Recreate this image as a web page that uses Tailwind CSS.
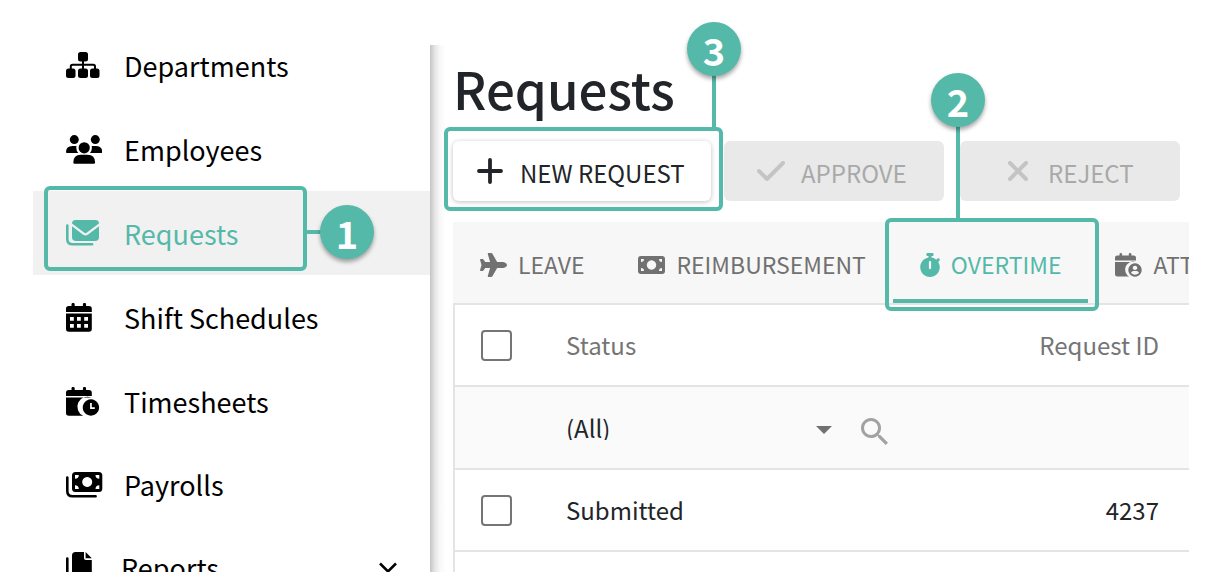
<!DOCTYPE html>
<html lang="en">
<head>
    <meta charset="UTF-8">
    <meta name="viewport" content="width=device-width, initial-scale=1.0">
    <title>Requests</title>
    <script src="https://cdn.jsdelivr.net/npm/@tailwindcss/browser@4"></script>
</head>
<body class="bg-white font-['Noto_Sans_CJK_SC','Noto_Sans',sans-serif]">
    <div class="h-screen pl-[33px] pr-[27px] pb-[5px]">
    <div class="flex h-full overflow-hidden">
        <!-- Sidebar -->
        <nav class="w-[397px] shrink-0 pt-[23px] text-[27px] leading-none text-black">
            <a href="#" class="flex h-[84px] items-center pl-[33px]">
                <span class="w-[58px]">
                    <svg class="h-[26px] w-[34px]" viewBox="0 0 34 26" fill="currentColor">
                        <rect x="12" y="0" width="10" height="9.5" rx="2.5"/>
                        <rect x="0" y="16.5" width="9.5" height="9.5" rx="2.5"/>
                        <rect x="12" y="16.5" width="10" height="9.5" rx="2.5"/>
                        <rect x="24" y="16.5" width="9.5" height="9.5" rx="2.5"/>
                        <path d="M17 8v10M4.8 18v-3.5q0-1.7 1.7-1.7h20.8q1.7 0 1.7 1.7V18" fill="none" stroke="currentColor" stroke-width="2"/>
                    </svg>
                </span>
                Departments
            </a>
            <a href="#" class="flex h-[84px] items-center pl-[33px]">
                <span class="w-[58px]">
                    <svg class="h-[29px] w-[36px]" viewBox="0 0 36 29" fill="currentColor">
                        <circle cx="8.3" cy="4.6" r="4.5"/>
                        <circle cx="29.3" cy="4.6" r="4.5"/>
                        <circle cx="18.2" cy="12.8" r="5.6"/>
                        <path d="M0 17q0-6 6.5-6h4q-.8 4.200 1.800 7H1q-1 0-1-1zM36.200 17q0-6-6.500-6h-4q.8 4.200-1.800 7h11.300q1 0 1-1zM7.300 27.500q0-7.800 7.500-7.800h6.800q7.500 0 7.500 7.800 0 1.300-1.300 1.300H8.600q-1.300 0-1.300-1.300z"/>
                    </svg>
                </span>
                Employees
            </a>
            <a href="#" class="relative flex h-[84px] items-center bg-[#f1f1f1] pl-[33px] text-[#54b9a9]">
                <span class="w-[58px]">
                    <svg class="h-[26px] w-[34px]" viewBox="0 0 34 26" fill="currentColor">
                        <path d="M1.300 5.500V19q0 5.300 5.300 5.300h19.500" fill="none" stroke="currentColor" stroke-width="2.600" stroke-linecap="round"/>
                        <path d="M6 3.500Q6 0 9.500 0h20Q33 0 33 3.500L20.600 12.800q-1.100.8-2.200 0zM6 6.300l10.900 8.200q2.600 1.900 5.200 0L33 6.300V17q0 4-4 4H10q-4 0-4-4z"/>
                    </svg>
                </span>
                Requests
                <span class="absolute -top-[5px] left-[11px] h-[85px] w-[263px] rounded-md border-4 border-[#54b9a9]"></span>
                <span class="absolute top-[39px] left-[273px] h-1 w-5 bg-[#54b9a9]"></span>
                <span class="absolute top-[14px] left-[287px] flex size-[54px] items-center justify-center rounded-full bg-[#54b9a9] pt-0.5 text-[38px] font-bold text-white shadow-[0_3px_4px_rgba(0,0,0,0.35)]">1</span>
            </a>
            <a href="#" class="flex h-[84px] items-center pl-[33px]">
                <span class="w-[58px]">
                    <svg class="h-[29px] w-[26px]" viewBox="0 0 26 29" fill="currentColor">
                        <path d="M5.500 3V1.500a1.600 1.600 0 0 1 3.200 0V3h8.200V1.500a1.600 1.600 0 0 1 3.200 0V3h2.900q2.800 0 2.800 2.800V9H0V5.800Q0 3 2.800 3z"/>
                        <path fill-rule="evenodd" d="M0 10.600h25.800V26q0 2.800-2.800 2.800H2.800Q0 28.800 0 26zM4 14v3.800h3.800V14zM11 14v3.800h3.800V14zM18.200 14v3.800H22V14zM4 21v3.800h3.800V21zM11 21v3.800h3.800V21zM18.200 21v3.800H22V21z"/>
                    </svg>
                </span>
                Shift Schedules
            </a>
            <a href="#" class="flex h-[84px] items-center pl-[33px]">
                <span class="w-[58px]">
                    <svg class="h-[29px] w-[34px]" viewBox="0 0 34 29" fill="currentColor">
                        <path d="M5.500 3V1.500a1.600 1.600 0 0 1 3.200 0V3h8.200V1.500a1.600 1.600 0 0 1 3.200 0V3h2.900q2.800 0 2.800 2.800V9H0V5.800Q0 3 2.800 3z"/>
                        <path d="M0 10.600h25.500a10 10 0 0 0-8.300 18.200H2.800Q0 28.800 0 26z"/>
                        <path fill-rule="evenodd" d="M24.900 12.300a8.200 8.200 0 1 0 .01 0zM24.100 16h1.700v4.200h3V22h-4.700z"/>
                    </svg>
                </span>
                Timesheets
            </a>
            <a href="#" class="flex h-[83px] items-center pl-[33px]">
                <span class="w-[58px]">
                    <svg class="h-[26px] w-[37px]" viewBox="0 0 37 26" fill="currentColor">
                        <path d="M1.300 5.500V19q0 5.300 5.300 5.300h23" fill="none" stroke="currentColor" stroke-width="2.600" stroke-linecap="round"/>
                        <path fill-rule="evenodd" d="M9.500 0h23.300q3.500 0 3.500 3.500v13q0 3.500-3.500 3.500H9.500Q6 20 6 16.500v-13Q6 0 9.500 0zM21.200 5a5 5 0 1 0 .01 0zM9 3v3.800Q12.800 6.800 12.800 3zM33.300 3h-3.800q0 3.800 3.800 3.800zM9 17v-3.800q3.800 0 3.800 3.800zM33.300 17v-3.800q-3.800 0-3.800 3.800z"/>
                    </svg>
                </span>
                Payrolls
            </a>
            <a href="#" class="flex h-[83px] items-center px-[33px]">
                <span class="w-[55px]">
                    <svg class="h-[31px] w-[26px]" viewBox="0 0 26 31" fill="currentColor">
                        <path d="M1.300 6.500V24q0 5.300 5.300 5.300h11" fill="none" stroke="currentColor" stroke-width="2.600" stroke-linecap="round"/>
                        <path d="M9.500 0H18v6q0 2 2 2h5.800v14q0 3.500-3.500 3.500H9.500Q6 25.500 6 22V3.500Q6 0 9.500 0zM19.600 0l6.200 6.300h-6.200z"/>
                    </svg>
                </span>
                Reports
                <svg class="ml-auto h-[12px] w-[18px]" viewBox="0 0 18 12" fill="none" stroke="currentColor" stroke-width="2.500">
                    <path d="M1 1.500l8 8 8-8"/>
                </svg>
            </a>
        </nav>

        <!-- Content -->
        <main class="mt-[45px] min-w-0 flex-1 bg-[linear-gradient(to_right,#c4c4c4,#e6e6e6_5px,#f8f8f8_10px,#ffffff_16px)] pl-[23px] text-[24px] leading-none text-[#212529]">
            <h1 class="mb-2.5 flex h-[86px] items-center text-[51px] font-medium">Requests</h1>

            <div class="flex">
                <div class="relative mr-[13px]">
                    <button class="flex h-[60px] w-[258px] items-center rounded-md bg-white pl-6 shadow-[0_1px_5px_rgba(0,0,0,0.25)]">
                        <svg class="mr-[17px] size-[26px]" viewBox="0 0 26 26" fill="none" stroke="currentColor" stroke-width="3.800" stroke-linecap="round">
                            <path d="M13 2v22M2 13h22"/>
                        </svg>
                        <span class="pt-1">NEW REQUEST</span>
                    </button>
                    <span class="pointer-events-none absolute -top-[14px] -left-[9px] h-[84px] w-[279px] rounded-md border-4 border-[#54b9a9]"></span>
                    <span class="absolute -top-[70px] left-[259px] h-14 w-1 bg-[#54b9a9]"></span>
                    <span class="absolute -top-[119px] left-[234px] flex size-[54px] items-center justify-center rounded-full bg-[#54b9a9] pt-0.5 text-[38px] font-bold text-white shadow-[0_3px_4px_rgba(0,0,0,0.35)]">3</span>
                </div>
                <button disabled class="mr-4 flex h-[60px] w-[220px] items-center rounded-md bg-[#e9e9e9] pl-[33px] text-[#a9a9a9]">
                    <svg class="mr-4 h-[20px] w-[28px] text-[#c4c4c4]" viewBox="0 0 28 20" fill="none" stroke="currentColor" stroke-width="4" stroke-linecap="round" stroke-linejoin="round">
                        <path d="M2 10l8 8L26 2"/>
                    </svg>
                    <span class="pt-1">APPROVE</span>
                </button>
                <button disabled class="flex h-[60px] w-[220px] items-center rounded-md bg-[#e9e9e9] pl-12 text-[#a9a9a9]">
                    <svg class="mr-5 size-[20px] text-[#c4c4c4]" viewBox="0 0 20 20" fill="none" stroke="currentColor" stroke-width="4" stroke-linecap="round">
                        <path d="M2 2l16 16M18 2L2 18"/>
                    </svg>
                    <span class="pt-1">REJECT</span>
                </button>
            </div>

            <div class="mt-[21px] flex h-[83px] border-b-2 border-[#e4e4e4] bg-[#f7f7f7] text-[23px] text-[#717171]">
                <button class="flex shrink-0 items-center gap-[11px] px-[27px] pt-1">
                    <svg class="h-[24px] w-[27px]" viewBox="0 0 576 512" fill="currentColor">
                        <path d="M482.300 192c34.200 0 93.700 29 93.700 64c0 36-59.500 64-93.700 64l-116.600 0L265.200 495.900c-5.700 10-16.300 16.100-27.800 16.100l-56.200 0c-10.600 0-18.300-10.200-15.400-20.400l49-171.600L112 320 68.800 377.600c-3 4-7.800 6.400-12.800 6.400l-42 0c-7.800 0-14-6.300-14-14c0-1.300 .2-2.600 .5-3.900L32 256 .5 145.900c-.4-1.300-.5-2.600-.5-3.900c0-7.800 6.300-14 14-14l42 0c5 0 9.800 2.400 12.800 6.400L112 192l102.900 0-49-171.600C162.900 10.200 170.600 0 181.200 0l56.200 0c11.500 0 22.100 6.200 27.800 16.100L365.700 192l116.600 0z"/>
                    </svg>
                    LEAVE
                </button>
                <button class="flex shrink-0 items-center gap-[11px] px-[27px] pt-1">
                    <svg class="h-[18px] w-[27px]" viewBox="0 0 27 18" fill="currentColor">
                        <path fill-rule="evenodd" d="M3 0h21q3 0 3 3v12q0 3-3 3H3q-3 0-3-3V3q0-3 3-3zM13.500 4.300a4.700 4.700 0 1 0 .01 0zM3 3v3Q6 6 6 3zM24 3h-3q0 3 3 3zM3 15v-3q3 0 3 3zM24 15v-3q-3 0-3 3z"/>
                    </svg>
                    REIMBURSEMENT
                </button>
                <button class="relative flex shrink-0 items-center gap-[11px] px-[27px] pt-1 text-[#54b9a9]">
                    <svg class="h-[24px] w-[20px]" viewBox="16 0 416 512" fill="currentColor">
                        <path d="M176 0c-17.700 0-32 14.300-32 32s14.300 32 32 32l16 0 0 34.400C92.300 113.800 16 200 16 304c0 114.900 93.100 208 208 208s208-93.100 208-208c0-41.800-12.300-80.700-33.500-113.200l24.100-24.100c12.500-12.500 12.500-32.800 0-45.300s-32.800-12.500-45.300 0L355.700 143c-28.100-23-62.200-38.800-99.700-44.600L256 64l16 0c17.700 0 32-14.300 32-32s-14.300-32-32-32L224 0 176 0zm72 192l0 128c0 13.300-10.700 24-24 24s-24-10.700-24-24l0-128c0-13.300 10.700-24 24-24s24 10.700 24 24z"/>
                    </svg>
                    OVERTIME
                    <span class="absolute inset-x-0 bottom-0 h-1 bg-[#54b9a9]"></span>
                    <span class="absolute -top-1 -right-[11px] -bottom-[8px] -left-[8px] rounded-md border-4 border-[#54b9a9]"></span>
                    <span class="absolute -top-[98px] left-[63px] h-[95px] w-1 bg-[#54b9a9]"></span>
                    <span class="absolute -top-[149px] left-[38px] flex size-[54px] items-center justify-center rounded-full bg-[#54b9a9] pt-0.5 text-[38px] font-bold text-white shadow-[0_3px_4px_rgba(0,0,0,0.35)]">2</span>
                </button>
                <button class="flex shrink-0 items-center gap-[11px] pl-[27px] pt-1">
                    <svg class="h-[24px] w-[27px]" viewBox="0 0 27 24" fill="currentColor">
                        <path d="M4.500 2.500V1.300a1.300 1.300 0 0 1 2.600 0v1.200h6.700V1.300a1.300 1.300 0 0 1 2.600 0v1.200h2.300Q21 2.500 21 4.800V7.500H0V4.800q0-2.300 2.300-2.300z"/>
                        <path d="M0 9h20.500a8 8 0 0 0-6.500 14.500H2.300Q0 23.500 0 21.200z"/>
                        <path fill-rule="evenodd" d="M20 10.300a6.700 6.700 0 1 0 .01 0zM20 12.700a2.200 2.200 0 1 1-.01 0zM16 20q.5-2 2.500-2h3q2 0 2.500 2-4 3.500-8 0z"/>
                    </svg>
                    ATT
                </button>
            </div>

            <table class="w-full table-fixed border-collapse border-l-2 border-[#e4e4e4]">
                <colgroup>
                    <col class="w-[100px]">
                    <col class="w-[288px]">
                    <col>
                </colgroup>
                <thead>
                    <tr class="h-[81px] border-b-2 border-[#e4e4e4] text-[#757575]">
                        <th class="pl-[26px] text-left"><input type="checkbox" aria-label="Select all" class="block size-[31px] appearance-none rounded-sm border-2 border-[#757575]"></th>
                        <th class="pl-3 text-left font-normal">Status</th>
                        <th class="pr-[30px] text-right font-normal">Request ID</th>
                    </tr>
                    <tr class="h-[83px] border-b-2 border-[#e4e4e4] bg-[#fafafa]">
                        <td></td>
                        <td class="pl-3">
                            <div class="relative">
                                <select aria-label="Filter by status" class="block h-10 w-full appearance-none bg-transparent">
                                    <option>(All)</option>
                                </select>
                                <svg class="pointer-events-none absolute top-[18px] right-[10px] h-[8px] w-[16px] text-[#717171]" viewBox="0 0 16 8" fill="currentColor"><path d="M0 0h16L8 8z"/></svg>
                            </div>
                        </td>
                        <td class="pl-[19px]">
                            <svg class="mt-2 size-[27px] text-[#a2a2a2]" viewBox="3 3 17.500 17.500" fill="currentColor">
                                <path d="M15.500 14h-.79l-.28-.27C15.410 12.590 16 11.110 16 9.500 16 5.910 13.090 3 9.500 3S3 5.910 3 9.500 5.910 16 9.500 16c1.610 0 3.090-.59 4.230-1.570l.27.28v.79l5 4.990L20.490 19l-4.990-5zm-6 0C7.010 14 5 11.990 5 9.500S7.010 5 9.500 5 14 7.010 14 9.500 11.990 14 9.500 14z"/>
                            </svg>
                        </td>
                    </tr>
                </thead>
                <tbody>
                    <tr class="h-[82px] border-b-2 border-[#e4e4e4]">
                        <td class="pl-[26px]"><input type="checkbox" aria-label="Select request 4237" class="block size-[31px] appearance-none rounded-sm border-2 border-[#757575]"></td>
                        <td class="pl-3">Submitted</td>
                        <td class="pr-[30px] text-right">4237</td>
                    </tr>
                    <tr class="h-[82px]">
                        <td></td>
                        <td></td>
                        <td></td>
                    </tr>
                </tbody>
            </table>
        </main>
    </div>
    </div>
</body>
</html>
